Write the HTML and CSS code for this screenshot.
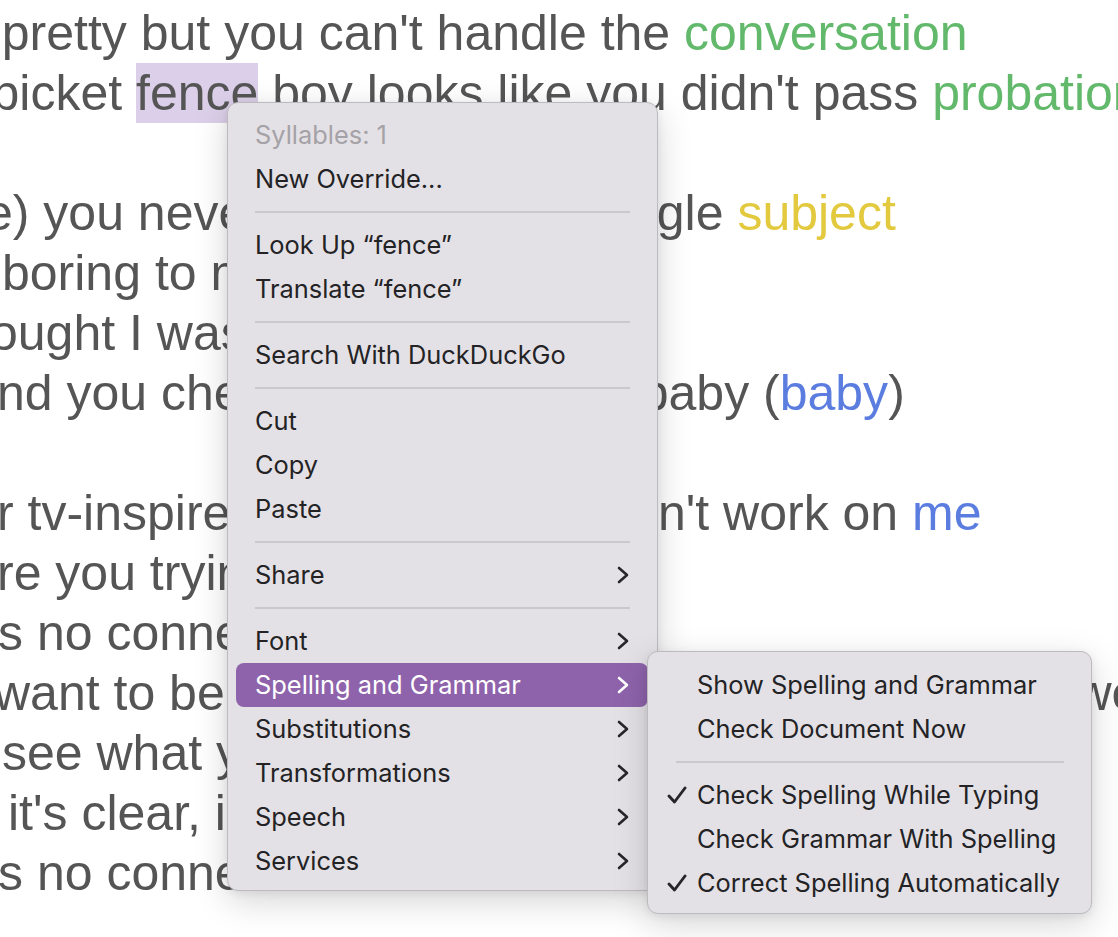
FILE: index.html
```html
<!DOCTYPE html>
<html lang="en">
<head>
<meta charset="utf-8">
<title>Lyrics — context menu</title>
<link rel="stylesheet" href="styles.css">
</head>
<body>
<main class="doc">
  <div class="line l0">gy, you got my type, baby, giving my type a try</div>
  <div class="line l1">pretty but you can't handle the <span class="g">conversation</span></div>
  <div class="line l2">picket <span class="sel">fence</span> boy looks like you didn't pass <span class="g">probation</span></div>
  <div class="line"></div>
  <div class="line l4">e) you never<span class="h4"> talked about a </span>single <span class="y">subject</span></div>
  <div class="line l5">boring to me</div>
  <div class="line l6">ought I was special</div>
  <div class="line l7">nd you checked<span class="h7"> out so early </span>baby (<span class="b">baby</span>)</div>
  <div class="line"></div>
  <div class="line l9">r tv-inspired<span class="h9"> pick up lines </span>don't work on <span class="b">me</span></div>
  <div class="line l10">re you trying to do</div>
  <div class="line l11">s no connection</div>
  <div class="line l12">want to be<span class="h12"> close to you but I don't really think that </span>we</div>
  <div class="line l13">see what you're doing</div>
  <div class="line l14">it's clear, i'm done</div>
  <div class="line l15">s no connection</div>
</main>

<div class="menu main-menu">
  <div class="item disabled"><span class="label">Syllables: 1</span></div>
  <div class="item"><span class="label">New Override...</span></div>
  <div class="sep"></div>
  <div class="item"><span class="label">Look Up “fence”</span></div>
  <div class="item"><span class="label">Translate “fence”</span></div>
  <div class="sep"></div>
  <div class="item"><span class="label">Search With DuckDuckGo</span></div>
  <div class="sep"></div>
  <div class="item"><span class="label">Cut</span></div>
  <div class="item"><span class="label">Copy</span></div>
  <div class="item"><span class="label">Paste</span></div>
  <div class="sep"></div>
  <div class="item"><span class="label">Share</span><svg class="chev" viewBox="0 0 12 20"><path d="M2 3 L10 10 L2 17"/></svg></div>
  <div class="sep"></div>
  <div class="item"><span class="label">Font</span><svg class="chev" viewBox="0 0 12 20"><path d="M2 3 L10 10 L2 17"/></svg></div>
  <div class="item active"><span class="label">Spelling and Grammar</span><svg class="chev" viewBox="0 0 12 20"><path d="M2 3 L10 10 L2 17"/></svg></div>
  <div class="item"><span class="label">Substitutions</span><svg class="chev" viewBox="0 0 12 20"><path d="M2 3 L10 10 L2 17"/></svg></div>
  <div class="item"><span class="label">Transformations</span><svg class="chev" viewBox="0 0 12 20"><path d="M2 3 L10 10 L2 17"/></svg></div>
  <div class="item"><span class="label">Speech</span><svg class="chev" viewBox="0 0 12 20"><path d="M2 3 L10 10 L2 17"/></svg></div>
  <div class="item"><span class="label">Services</span><svg class="chev" viewBox="0 0 12 20"><path d="M2 3 L10 10 L2 17"/></svg></div>
</div>

<div class="menu sub-menu">
  <div class="item"><span class="mark"></span><span class="label">Show Spelling and Grammar</span></div>
  <div class="item"><span class="mark"></span><span class="label">Check Document Now</span></div>
  <div class="sep"></div>
  <div class="item"><span class="mark"><svg class="check" viewBox="0 0 20 18"><path d="M2 10 L7.5 16 L18 2"/></svg></span><span class="label">Check Spelling While Typing</span></div>
  <div class="item"><span class="mark"></span><span class="label">Check Grammar With Spelling</span></div>
  <div class="item"><span class="mark"><svg class="check" viewBox="0 0 20 18"><path d="M2 10 L7.5 16 L18 2"/></svg></span><span class="label">Correct Spelling Automatically</span></div>
</div>
</body>
</html>
```

FILE: styles.css
```css
html, body {
  margin: 0;
  padding: 0;
  background: #ffffff;
  overflow: hidden;
}

body {
  position: relative;
  width: 1118px;
  height: 937px;
}

/* ---------- document text ---------- */
.doc {
  margin-top: -57px;
  font-family: "Liberation Sans", Arial, Helvetica, sans-serif;
  font-size: 50px;
  line-height: 60px;
  color: #555555;
  overflow: hidden;
}

.line {
  height: 60px;
  white-space: nowrap;
}

.l0 { text-indent: 0; }
.l1 { text-indent: 1.8px; }
.l2 { text-indent: -8.5px; }
.l4 { text-indent: -15px; }
.l5 { text-indent: 2px; }
.l6 { text-indent: -10px; }
.l7 { text-indent: -3px; }
.l9 { text-indent: -3px; }
.l10 { text-indent: -3px; }
.l11 { text-indent: -2px; }
.l12 { text-indent: -6px; }
.l13 { text-indent: 2px; }
.l14 { text-indent: 8px; }
.l15 { text-indent: -2px; }

.h4 { word-spacing: -3px; }
.h7 { word-spacing: 1.8px; }
.h9 { word-spacing: 10.3px; }
.h12 { word-spacing: -2.6px; }

.g { color: #63b96b; }
.y { color: #e2c93d; }
.b { color: #5b7ddf; }

.sel {
  display: inline-block;
  text-indent: 0;
  background: #dccfe9;
  line-height: 60px;
  height: 60px;
}

/* ---------- context menus ---------- */
.menu {
  position: absolute;
  box-sizing: border-box;
  background: #e4e1e6;
  border: 1px solid #bdbac0;
  border-radius: 11px;
  box-shadow: 0 10px 34px rgba(0, 0, 0, 0.17), 0 2px 8px rgba(0, 0, 0, 0.07);
  font-family: Inter, "Noto Sans", "DejaVu Sans", sans-serif;
  font-size: 25.4px;
  color: #232325;
}

.main-menu {
  left: 227px;
  top: 102px;
  width: 431px;
  padding: 10px 9px 7px 8px;
}

.sub-menu {
  left: 647px;
  top: 651px;
  width: 445px;
  padding: 11px 9px 8px 8px;
}

.item {
  box-sizing: border-box;
  height: 44px;
  display: flex;
  align-items: center;
  padding: 0 19px 2px 19px;
  border-radius: 8px;
  white-space: nowrap;
}

.item .label {
  flex: 1;
}

.item.disabled {
  color: #a4a2a7;
}

.item.active {
  background: #8e63ab;
  color: #ffffff;
}

.sep {
  height: 22px;
  display: flex;
  align-items: center;
  padding: 0 18px 0 19px;
}

.sep::before {
  content: "";
  flex: 1;
  height: 2px;
  background: #cac7cd;
}

.sub-menu .sep {
  padding: 0 18px 0 20px;
}

.chev {
  width: 12px;
  height: 20px;
  margin-top: 2px;
  fill: none;
  stroke: #262628;
  stroke-width: 2.6;
  stroke-linecap: round;
  stroke-linejoin: round;
}

.item.active .chev {
  stroke: #ffffff;
}

.sub-menu .item {
  padding-left: 11px;
}

.mark {
  width: 30px;
  height: 44px;
  display: flex;
  align-items: center;
  margin-top: 2px;
}

.check {
  width: 20px;
  height: 18px;
  fill: none;
  stroke: #262628;
  stroke-width: 2.9;
  stroke-linecap: round;
  stroke-linejoin: round;
}
```
